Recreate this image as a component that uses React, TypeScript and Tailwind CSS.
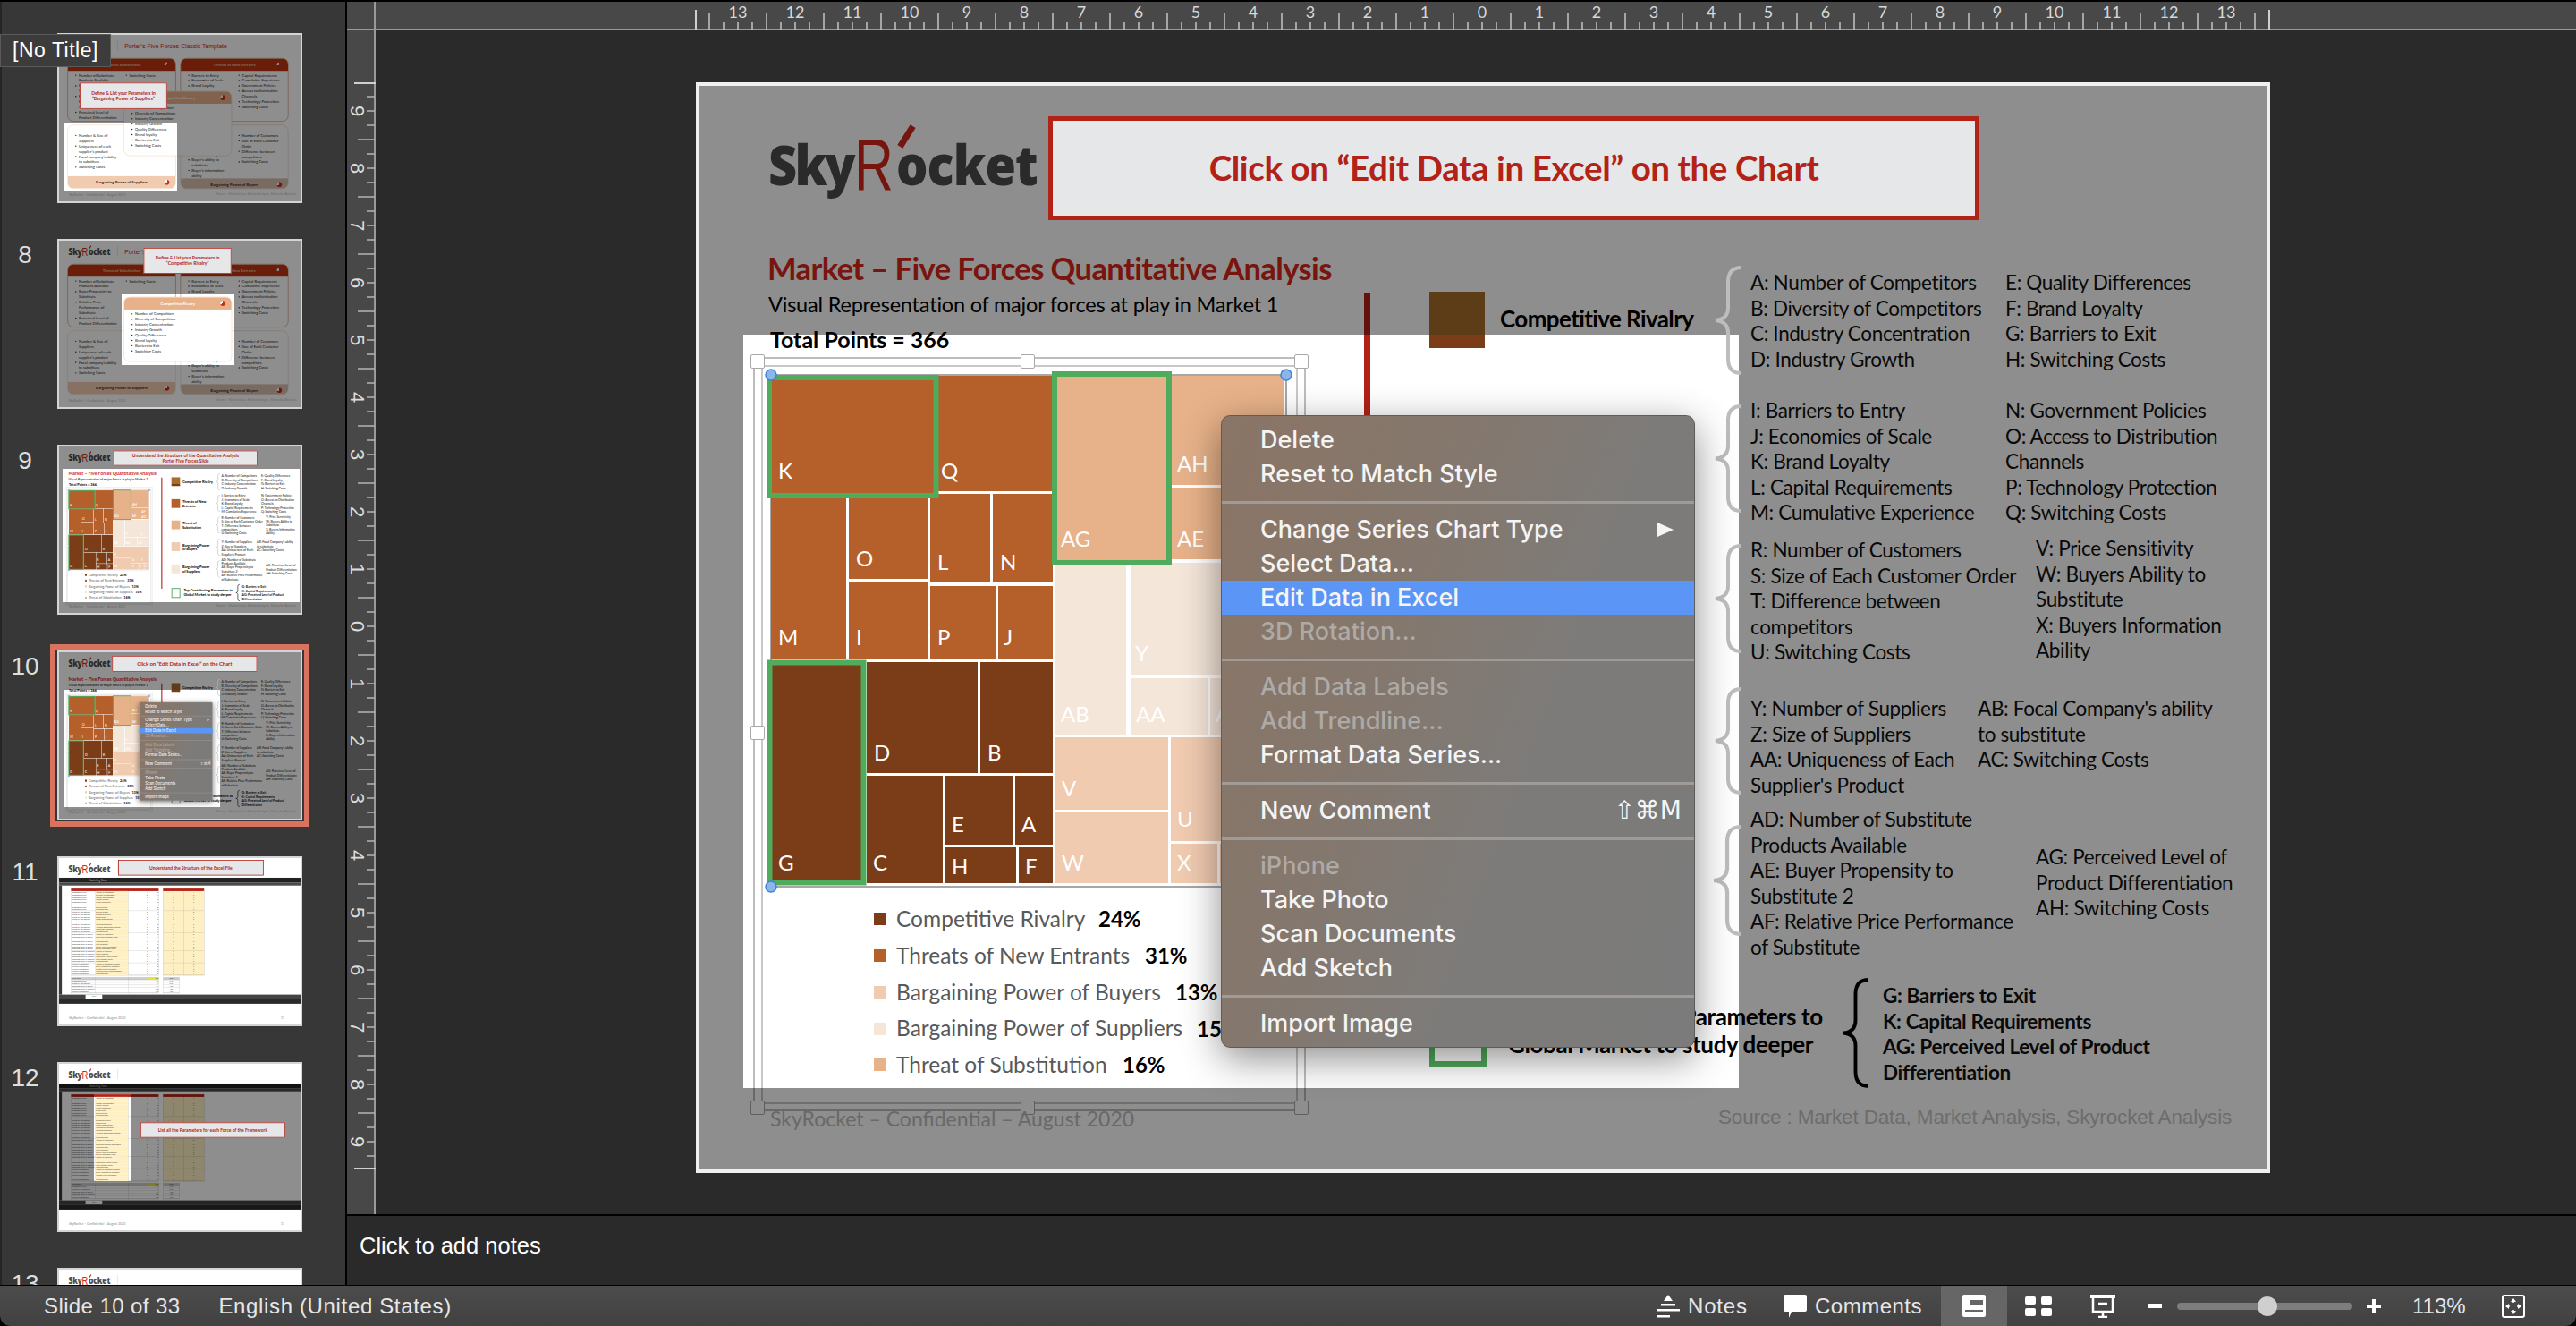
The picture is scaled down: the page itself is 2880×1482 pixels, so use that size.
import React from 'react';

const FORCES = ['Competitive Rivalry', 'Threats of New Entrants', 'Bargaining Power of Buyers', 'Bargaining Power of Suppliers', 'Threat of Substitution'];

const PARAMS: [number, string][] = [
  [0, 'Number of Competitors'], [0, 'Diversity of Competitors'], [0, 'Industry Concentration'], [0, 'Industry Growth'],
  [0, 'Quality Differences'], [0, 'Brand Loyalty'], [0, 'Barriers to Exit'], [0, 'Switching Costs'],
  [1, 'Barriers to Entry'], [1, 'Economies of Scale'], [1, 'Brand Loyalty'], [1, 'Capital Requirements'],
  [1, 'Cumulative Experience'], [1, 'Government Policies'], [1, 'Access to Distribution Channels'], [1, 'Technology Protection'], [1, 'Switching Costs'],
  [2, 'Number of Customers'], [2, 'Size of Each Customer Order'], [2, 'Difference between competitors'], [2, 'Switching Costs'],
  [2, 'Price Sensitivity'], [2, 'Buyers Ability to Substitute'], [2, 'Buyers Information Ability'],
  [3, 'Number of Suppliers'], [3, 'Size of Suppliers'], [3, 'Uniqueness of Each Product'], [3, 'Focal Company ability'], [3, 'Switching Costs'],
  [4, 'Number of Substitute Products'], [4, 'Buyer Propensity to Substitute'], [4, 'Relative Price Performance'], [4, 'Perceived Level of Differentiation'], [4, 'Switching Costs'],
];

const ORANGE = '#b55f2a';
const BROWN = '#7b3d18';
const PEACH = '#e7b28a';
const PALE = '#f5e6da';
const SAND = '#f0cbb0';

// x, y, right, bottom in page pixels, label offset from the left
const CELLS: [string, number, number, number, number, string, number, number][] = [
  ['K', 862, 420, 1048, 551, ORANGE, 8, 16],
  ['Q', 1049, 420, 1177, 549, ORANGE, 3, 14],
  ['M', 862, 551, 946, 736, ORANGE, 8, 15],
  ['O', 949, 551, 1037, 647, ORANGE, 8, 14],
  ['I', 949, 650, 1037, 736, ORANGE, 8, 15],
  ['L', 1040, 552, 1107, 651, ORANGE, 8, 14],
  ['N', 1110, 552, 1177, 651, ORANGE, 8, 14],
  ['P', 1040, 655, 1113, 736, ORANGE, 8, 15],
  ['J', 1116, 655, 1177, 736, ORANGE, 6, 15],
  ['G', 862, 739, 966, 987, BROWN, 8, 14],
  ['D', 969, 740, 1093, 864, BROWN, 8, 14],
  ['B', 1096, 740, 1177, 864, BROWN, 8, 14],
  ['C', 969, 867, 1054, 987, BROWN, 7, 14],
  ['E', 1057, 867, 1132, 944, BROWN, 7, 14],
  ['A', 1135, 867, 1177, 944, BROWN, 7, 14],
  ['H', 1057, 947, 1136, 987, BROWN, 7, 10],
  ['F', 1139, 947, 1177, 987, BROWN, 7, 10],
  ['AG', 1177, 420, 1306, 629, PEACH, 9, 18],
  ['AH', 1310, 420, 1436, 542, PEACH, 6, 15],
  ['AE', 1310, 545, 1372, 625, PEACH, 6, 14],
  ['AF', 1375, 545, 1436, 590, PEACH, 6, 10],
  ['AD', 1375, 593, 1436, 625, PEACH, 6, 8],
  ['AB', 1180, 632, 1259, 821, PALE, 6, 14],
  ['Y', 1264, 629, 1370, 754, PALE, 5, 15],
  ['Z', 1373, 629, 1436, 754, PALE, 6, 15],
  ['AA', 1264, 758, 1350, 821, PALE, 6, 14],
  ['AC', 1353, 758, 1436, 821, PALE, 6, 14],
  ['V', 1180, 824, 1306, 905, SAND, 7, 15],
  ['W', 1180, 908, 1306, 987, SAND, 7, 14],
  ['U', 1309, 824, 1370, 940, SAND, 7, 16],
  ['T', 1373, 824, 1436, 940, SAND, 7, 16],
  ['X', 1309, 943, 1361, 987, SAND, 7, 14],
  ['R', 1364, 943, 1400, 987, SAND, 5, 14],
  ['S', 1403, 943, 1436, 987, SAND, 5, 14],
];

function Treemap() {
  return (
    <svg className="absolute left-[72px] top-[317px] w-[600px] h-[684px]" viewBox="850 409 600 684">
      <rect x="862" y="419" width="576" height="572" fill="white" stroke="#8a8a8a" strokeWidth="1.5" />
      {CELLS.map(([name, x, y, r, b, fill, lx, ly]) => (
        <g key={name}>
          <rect x={x} y={y} width={r - x} height={b - y} fill={fill} />
          <text x={x + lx} y={b - ly} fill="white" fontSize="24">{name}</text>
        </g>
      ))}
      <rect x="860" y="422" width="186.500" height="132" fill="none" stroke="#51ab5c" strokeWidth="6" />
      <rect x="1179" y="418" width="128" height="211" fill="none" stroke="#51ab5c" strokeWidth="6" />
      <rect x="860.500" y="740.500" width="105" height="246" fill="none" stroke="#51ab5c" strokeWidth="6" />
      <circle cx="862" cy="419" r="6" fill="#8ab6ec" stroke="#3c82d8" strokeWidth="1.500" />
      <circle cx="862" cy="991" r="6" fill="#8ab6ec" stroke="#3c82d8" strokeWidth="1.500" />
      <circle cx="1438" cy="419" r="6" fill="#8ab6ec" stroke="#3c82d8" strokeWidth="1.500" />
    </svg>
  );
}

function Logo() {
  return (
    <div className="absolute left-[81px] top-[46px] h-[90px] w-[300px]">
      <span className="absolute left-0 top-[3px] text-[62px] leading-[84px] font-black tracking-[-3px] scale-x-[0.9] origin-left text-[#4c4c4c] [font-family:'Open_Sans',sans-serif]">Sky</span>
      <span className="absolute left-[96px] top-[-4px] text-[82px] leading-[100px] text-[#d4241a] [font-family:'Liberation_Sans',sans-serif] scale-x-[0.74] origin-left">R</span>
      <span className="absolute left-[151px] top-[1px] w-[7px] h-[27px] bg-[#d4241a] rotate-[32deg]" />
      <span className="absolute left-[143px] top-[3px] text-[62px] leading-[84px] font-black tracking-[-1.100px] scale-x-[0.9] origin-left text-[#4c4c4c] [font-family:'Open_Sans',sans-serif]">ocket</span>
    </div>
  );
}

function Brace({ className, stroke = '#bdbdbd' }: { className: string; stroke?: string }) {
  return (
    <svg className={className} viewBox="0 0 32 122" preserveAspectRatio="none" fill="none">
      <path d="M32 2C21 2 17 8 17 18L17 47C17 55 13 60 3 61C13 62 17 67 17 75L17 104C17 114 21 120 32 120" stroke={stroke} strokeWidth="4" />
    </svg>
  );
}

function TextCol({ className, lines }: { className: string; lines: string[] }) {
  return (
    <div className={`absolute whitespace-nowrap text-[22.5px] leading-[28.500px] tracking-[-0.35px] text-[#111] ${className}`}>
      {lines.map((l) => (
        <div key={l}>{l}</div>
      ))}
    </div>
  );
}

const LEGEND = [
  { name: FORCES[0], pct: '24%', color: 'bg-[#7b3d18]', w: 'w-[226px]' },
  { name: FORCES[1], pct: '31%', color: 'bg-[#b55f2a]', w: 'w-[278px]' },
  { name: FORCES[2], pct: '13%', color: 'bg-[#f0cbb0]', w: 'w-[312px]' },
  { name: FORCES[3], pct: '15%', color: 'bg-[#f5e6da]', w: 'w-[336px]' },
  { name: FORCES[4], pct: '16%', color: 'bg-[#e7b28a]', w: 'w-[253px]' },
];

function Legend() {
  return (
    <div className="absolute left-[199px] top-[915px] flex flex-col">
      {LEGEND.map((row) => (
        <div key={row.name} className="flex h-[40.750px] items-center whitespace-nowrap">
          <div className={`w-[13px] h-[14px] mr-[12px] ${row.color}`} />
          <div className={`text-[24.500px] text-[#595959] ${row.w}`}>{row.name}</div>
          <div className="text-[24px] font-bold text-black">{row.pct}</div>
        </div>
      ))}
    </div>
  );
}

function Callout({ className, children }: { className: string; children: React.ReactNode }) {
  return (
    <div className={`absolute z-20 flex items-center justify-center border-[5px] border-[#b22217] bg-[#e6e7e9] text-center font-bold text-[#b22217] ${className}`}>
      {children}
    </div>
  );
}

function Footer() {
  return (
    <>
      <div className="absolute left-[83px] top-[1143px] text-[23px] leading-[30px] whitespace-nowrap text-[#bcbcbc]">SkyRocket – Confidential – August 2020</div>
      <div className="absolute left-[1143px] top-[1142px] text-[22.500px] leading-[30px] tracking-[-0.15px] whitespace-nowrap text-[#c4c4c4] [font-family:'Liberation_Sans',sans-serif]">Source : Market Data, Market Analysis, Skyrocket Analysis</div>
    </>
  );
}

const SWATCHES = [
  { top: 'top-[234px]', bg: 'bg-[linear-gradient(#a66e2b_48px,#7b3d18_48px)]', label: 'Competitive Rivalry', ltop: 'top-[249px]' },
  { top: 'top-[391px]', bg: 'bg-[#b55f2a]', label: 'Threats of New Entrants', ltop: 'top-[395px]' },
  { top: 'top-[544px]', bg: 'bg-[#e7b28a]', label: 'Threat of Substitution', ltop: 'top-[548px]' },
  { top: 'top-[701px]', bg: 'bg-[#f0cbb0]', label: 'Bargaining Power of Buyers', ltop: 'top-[705px]' },
  { top: 'top-[860px]', bg: 'bg-[#f5e6da]', label: 'Bargaining Power of Suppliers', ltop: 'top-[864px]' },
];

function Forces({ menu, spot, callout, calloutClass, calloutText }: { menu?: boolean; spot: string; callout: string; calloutClass: string; calloutText: string }) {
  return (
    <>
      <Logo />
      <div className="absolute left-[80px] top-[186px] text-[34.500px] leading-[44px] font-bold whitespace-nowrap tracking-[-0.6px] text-[#d8261a]">Market – Five Forces Quantitative Analysis</div>
      <div className="absolute left-[81px] top-[232px] text-[23.500px] leading-[32px] tracking-[-0.2px] whitespace-nowrap text-black">Visual Representation of major forces at play in Market 1</div>
      <div className="absolute left-[83px] top-[270px] text-[25px] leading-[34px] font-bold whitespace-nowrap text-black">Total Points = 366</div>

      <div className="absolute left-[747px] top-[236px] w-[7px] h-[798px] bg-[#b22217]" />
      {SWATCHES.map((s) => (
        <div key={s.label}>
          <div className={`absolute left-[820px] w-[62px] h-[63px] ${s.top} ${s.bg}`} />
          <div className={`absolute left-[899px] text-[26px] leading-[30px] font-bold tracking-[-0.6px] text-black ${s.ltop} ${s.label.length > 19 ? 'w-[205px]' : 'w-[230px] whitespace-nowrap'}`}>{s.label}</div>
        </div>
      ))}
      <div className="absolute left-[820px] top-[1029px] w-[64px] h-[71px] border-[6px] border-[#51ab5c] bg-white" />
      <div className="absolute left-[908px] top-[1029px] text-[26px] leading-[31px] font-bold tracking-[-0.4px] whitespace-nowrap text-black">
        <div>Top Contributing Parameters to</div>
        <div>Global Market to study deeper</div>
      </div>

      <TextCol className="left-[1179px] top-[210px]" lines={['A: Number of Competitors', 'B: Diversity of Competitors', 'C: Industry Concentration', 'D: Industry Growth']} />
      <TextCol className="left-[1464px] top-[210px]" lines={['E: Quality Differences', 'F: Brand Loyalty', 'G: Barriers to Exit', 'H: Switching Costs']} />
      <TextCol className="left-[1179px] top-[353px]" lines={['I: Barriers to Entry', 'J: Economies of Scale', 'K: Brand Loyalty', 'L: Capital Requirements', 'M: Cumulative Experience']} />
      <TextCol className="left-[1464px] top-[353px]" lines={['N: Government Policies', 'O: Access to Distribution', 'Channels', 'P: Technology Protection', 'Q: Switching Costs']} />
      <TextCol className="left-[1179px] top-[509px]" lines={['R: Number of Customers', 'S: Size of Each Customer Order', 'T: Difference between', 'competitors', 'U: Switching Costs']} />
      <TextCol className="left-[1498px] top-[507px]" lines={['V: Price Sensitivity', 'W: Buyers Ability to', 'Substitute', 'X: Buyers Information', 'Ability']} />
      <TextCol className="left-[1179px] top-[686px]" lines={['Y: Number of Suppliers', 'Z: Size of Suppliers', 'AA: Uniqueness of Each', "Supplier's Product"]} />
      <TextCol className="left-[1433px] top-[686px]" lines={["AB: Focal Company's ability", 'to substitute', 'AC: Switching Costs']} />
      <TextCol className="left-[1179px] top-[810px]" lines={['AD: Number of Substitute', 'Products Available', 'AE: Buyer Propensity to', 'Substitute 2', 'AF: Relative Price Performance', 'of Substitute']} />
      <TextCol className="left-[1498px] top-[852px]" lines={['AG: Perceived Level of', 'Product Differentiation', 'AH: Switching Costs']} />
      <TextCol className="left-[1327px] top-[1007px] font-bold" lines={['G: Barriers to Exit', 'K: Capital Requirements', 'AG: Perceived Level of Product', 'Differentiation']} />

      <div className="absolute left-[64px] top-[307px] w-[618px] h-[843px] border-2 border-[#bdbdbd]" />
      <div className="absolute left-[73px] top-[316px] w-[600px] h-[826px] border-2 border-[#c8c8c8]" />
      <Treemap />
      {['left-[61px] top-[304px]', 'left-[363px] top-[304px]', 'left-[669px] top-[304px]', 'left-[61px] top-[719px]', 'left-[61px] top-[1138px]', 'left-[363px] top-[1138px]', 'left-[669px] top-[1138px]', 'left-[669px] top-[719px]'].map((c) => (
        <div key={c} className={`absolute w-[16px] h-[16px] rounded-[2px] border border-[#aaa] bg-white ${c}`} />
      ))}
      <Legend />
      <Footer />

      <div className={`absolute ${spot} shadow-[0_0_0_3000px_rgba(0,0,0,0.443)]`} />

      <Brace className="absolute z-10 left-[1137px] top-[205px] w-[32px] h-[122px]" />
      <Brace className="absolute z-10 left-[1137px] top-[360px] w-[32px] h-[121px]" />
      <Brace className="absolute z-10 left-[1137px] top-[516px] w-[32px] h-[122px]" />
      <Brace className="absolute z-10 left-[1137px] top-[676px] w-[32px] h-[120px]" />
      <Brace className="absolute z-10 left-[1135px] top-[830px] w-[34px] h-[124px]" />
      <Brace className="absolute z-10 left-[1280px] top-[1001px] w-[31px] h-[123px]" stroke="#000" />

      <Callout className={calloutClass}>
        <div className={`whitespace-pre-line ${callout}`}>{calloutText}</div>
      </Callout>
      {menu && <ContextMenu />}
    </>
  );
}

type MenuRow = { label?: string; dim?: boolean; active?: boolean; arrow?: boolean; keys?: string };

const MENU: MenuRow[] = [
  { label: 'Delete' }, { label: 'Reset to Match Style' }, {},
  { label: 'Change Series Chart Type', arrow: true }, { label: 'Select Data...' }, { label: 'Edit Data in Excel', active: true }, { label: '3D Rotation...', dim: true }, {},
  { label: 'Add Data Labels', dim: true }, { label: 'Add Trendline...', dim: true }, { label: 'Format Data Series...' }, {},
  { label: 'New Comment', keys: '⇧⌘M' }, {},
  { label: 'iPhone', dim: true }, { label: 'Take Photo' }, { label: 'Scan Documents' }, { label: 'Add Sketch' }, {},
  { label: 'Import Image' },
];

function ContextMenu() {
  return (
    <div className="absolute z-30 left-[587px] top-[372px] w-[530px] h-[707px] rounded-[10px] border border-[#5c5c5c] bg-[linear-gradient(110deg,#8a7566_0%,#85776c_32%,#7d7b79_62%,#7b7b7b_100%)] py-[8px] shadow-[0_12px_44px_rgba(0,0,0,0.45)] [font-family:Inter,sans-serif]">
      {MENU.map((row, i) =>
        row.label ? (
          <div key={row.label} className={`flex h-[38px] items-center justify-between pl-[43px] pr-[14px] text-[27px] font-medium whitespace-nowrap ${row.active ? 'bg-[#5b96f7] text-[#f5f5f5]' : row.dim ? 'text-[#aeaaa6]' : 'text-[#f4f4f4]'}`}>
            <span>{row.label}</span>
            {row.arrow && (
              <svg className="mr-[9px] w-[18px] h-[18px]" viewBox="0 0 18 18"><path d="M0 1L18 9L0 17Z" fill="#f4f4f4" /></svg>
            )}
            {row.keys && <span className="text-[28px] [font-family:'DejaVu_Sans',sans-serif]">{row.keys}</span>}
          </div>
        ) : (
          <div key={i} className="flex h-[24px] items-center">
            <div className="h-[3px] w-full bg-[#a09b96]" />
          </div>
        ),
      )}
    </div>
  );
}

type PanelProps = { pos: string; title: string; head: string; bottom?: boolean; border: string; cols: string[][]; colClass?: string };

function Panel({ pos, title, head, bottom, border, cols, colClass }: PanelProps) {
  const header = (
    <div className={`flex h-[88px] shrink-0 items-center justify-center relative text-[28px] font-bold ${head}`}>
      {title}
      <div className="absolute right-[44px] w-[36px] h-[36px] rounded-full bg-[conic-gradient(#cc2a1c_0_70%,#f4f4f4_70%)]" />
    </div>
  );
  return (
    <div className={`absolute flex flex-col overflow-hidden rounded-[44px] border-[3px] bg-white ${border} ${pos}`}>
      {!bottom && header}
      <div className={`flex flex-1 gap-[24px] px-[36px] text-[27px] leading-[38px] text-[#222] ${colClass ?? 'pt-[12px]'}`}>
        {cols.map((c, i) => (
          <ul key={i} className="flex-1 list-disc pl-[42px]">
            {c.map((item) => (
              <li key={item}>{item}</li>
            ))}
          </ul>
        ))}
      </div>
      {bottom && header}
    </div>
  );
}

function PorterSlide({ spot, calloutClass, lines, hideLogo }: { spot: string; calloutClass: string; lines: string[]; hideLogo?: boolean }) {
  return (
    <>
      {!hideLogo && <Logo />}
      <div className="absolute left-[430px] top-[52px] w-[3px] h-[70px] bg-[#ccc]" />
      <div className="absolute left-[483px] top-[68px] text-[44px] leading-[56px] whitespace-nowrap text-[#d8261a] [font-family:'Liberation_Sans',sans-serif]">Porter's Five Forces Classic Template</div>
      <Panel pos="left-[73px] top-[180px] w-[779px] h-[455px]" title="Threat of Substitution" head="bg-[#be3612] text-[#e8c0a8]" border="border-[#be6a30]"
        cols={[['Number of Substitute Products Available', 'Buyer Propensity to Substitute', 'Relative Price Performance of Substitute', 'Perceived Level of Product Differentiation'], ['Switching Costs']]} />
      <Panel pos="left-[884px] top-[180px] w-[776px] h-[455px]" title="Threats of New Entrants" head="bg-[#be3612] text-[#e8c0a8]" border="border-[#be6a30]"
        cols={[['Barriers to Entry', 'Economies of Scale', 'Brand Loyalty'], ['Capital Requirements', 'Cumulative Experience', 'Government Policies', 'Access to distribution Channels', 'Technology Protection', 'Switching Costs']]} />
      <Panel pos="left-[73px] top-[658px] w-[779px] h-[460px]" bottom title="Bargaining Power of Suppliers" head="bg-[#f0cbb0] text-[#333]" border="border-[#f0cbb0]" colClass="pt-[54px]"
        cols={[['Number & Size of Suppliers', "Uniqueness of each supplier's product", "Focal company's ability to substitute", 'Switching Costs'], []]} />
      <Panel pos="left-[884px] top-[658px] w-[776px] h-[460px]" bottom title="Bargaining Power of Buyers" head="bg-[#dcc0ae] text-[#333]" border="border-[#dcc0ae]" colClass="pt-[54px] [&>ul:first-child]:pt-[138px]"
        cols={[['Price Sensitivity', "Buyer's ability to substitute", "Buyer's information ability"], ['Number of Customers', 'Size of Each Customer Order', 'Difference between competitors', 'Switching Costs']]} />
      <Panel pos="left-[477px] top-[416px] w-[777px] h-[466px]" title="Competitive Rivalry" head="bg-[#e7b28a] text-white" border="border-[#f0cbb0]"
        cols={[['Number of Competitors', 'Diversity of Competitors', 'Industry Concentration', 'Industry Growth', 'Quality Differences', 'Brand loyalty', 'Barriers to Exit', 'Switching Costs']]} />
      <Footer />
      <div className={`absolute ${spot} shadow-[0_0_0_3000px_rgba(0,0,0,0.443)]`} />
      <Callout className={`text-[32px] leading-[38px] ${calloutClass}`}>
        <div>
          {lines.map((l) => (
            <div key={l}>{l}</div>
          ))}
        </div>
      </Callout>
    </>
  );
}

function SheetCell({ className, children }: { className: string; children?: React.ReactNode }) {
  return <div className={`truncate border-r border-[#777] px-[4px] ${className}`}>{children}</div>;
}

function Sheet() {
  return (
    <div className="absolute left-[13px] top-[154px] w-[1734px] h-[905px] flex flex-col bg-white">
      <div className="flex h-[36px] items-center bg-[#222] pl-[220px] text-[18px] text-[#bbb]">Switching Costs</div>
      <div className="h-[20px] bg-[#4a4a4a]" />
      <div className="flex flex-1 min-h-0">
        <div className="w-[20px] bg-[#3a3a3a]" />
        <div className="flex flex-col pl-[65px] pt-[21px] text-[12.500px] leading-[17.760px] text-[#444]">
          <div className="flex gap-[30px]">
            <div className="w-[631px] border border-[#777]">
              <div className="grid h-[18px] grid-cols-[175px_235px_146px_75px] bg-[#b22217]" />
              {PARAMS.map(([f, p], i) => (
                <div key={i} className={`grid grid-cols-[175px_235px_146px_75px] h-[17.760px] ${PARAMS[i + 1]?.[0] !== f ? 'border-b border-[#777]' : ''}`}>
                  <SheetCell className="">{FORCES[f]}</SheetCell>
                  <SheetCell className="bg-[#fff0c4]">{p}</SheetCell>
                  <SheetCell className="text-right">{(i * 7) % 9 + 1}</SheetCell>
                  <div className="px-[4px] text-right">{(i * 5) % 8 + 2}</div>
                </div>
              ))}
            </div>
            <div className="w-[296px] border border-[#777] bg-[#fff0c4]">
              <div className="h-[18px] bg-[#b22217]" />
              {PARAMS.map(([f], i) => (
                <div key={i} className={`grid grid-cols-2 h-[17.760px] text-center ${PARAMS[i + 1]?.[0] !== f ? 'border-b border-[#777]' : ''}`}>
                  <SheetCell className="">{(i * 3) % 7 + 1}</SheetCell>
                  <div>{(i * 11) % 9 + 1}</div>
                </div>
              ))}
            </div>
          </div>
          <div className="flex gap-[30px] pt-[12px]">
            <div className="w-[631px] border border-[#777]">
              {['Grand Total', ...FORCES].map((f, i) => (
                <div key={f} className={`grid grid-cols-[175px_235px_146px_75px] h-[19px] border-b border-[#777] ${i === 0 ? 'bg-[#ccc]' : ''}`}>
                  <SheetCell className="">{f}</SheetCell>
                  <SheetCell className="" />
                  <SheetCell className="" />
                  <div className={`text-right px-[4px] ${i === 0 ? 'bg-[#e6e040]' : ''}`}>{i === 0 ? 366 : 40 + i * 17}</div>
                </div>
              ))}
            </div>
            <div className="w-[120px] border border-[#777]">
              {['Total', '24%', '31%', '13%', '15%', '16%'].map((f, i) => (
                <div key={f} className={`h-[19px] border-b border-[#777] text-center ${i === 0 ? 'bg-[#ccc]' : ''}`}>{f}</div>
              ))}
            </div>
          </div>
        </div>
      </div>
      <div className="flex h-[30px] items-center bg-[#444] pl-[190px]">
        <div className="w-[120px] h-full bg-white text-center text-[14px] text-[#397]">Data</div>
      </div>
      <div className="h-[36px] bg-[#2a2a2a]" />
    </div>
  );
}

function ExcelSlide({ dimmed }: { dimmed?: boolean }) {
  return (
    <>
      <Logo />
      <div className="absolute left-[430px] top-[52px] w-[3px] h-[70px] bg-[#ccc]" />
      <Sheet />
      {dimmed && (
        <div className="absolute left-[13px] top-[154px] w-[1734px] h-[905px] overflow-hidden">
          <div className="absolute left-[252px] top-[75px] w-[270px] h-[623px] shadow-[0_0_0_3000px_rgba(0,0,0,0.443)]" />
        </div>
      )}
      <div className="absolute left-[83px] top-[1144px] text-[23px] leading-[30px] whitespace-nowrap text-[#888]">SkyRocket – Confidential – August 2020</div>
      <div className="absolute left-[1605px] top-[1147px] text-[23px] leading-[30px] text-[#888]">11</div>
    </>
  );
}

function Slide({ children }: { children: React.ReactNode }) {
  return (
    <div className="relative w-[1760px] h-[1219px] overflow-hidden bg-white [font-family:Lato,sans-serif]">
      {children}
      <div className="pointer-events-none absolute inset-0 z-40 border-x-[3px] border-t-[4px] border-b-[4px] border-[#efefef]" />
    </div>
  );
}

const forcesMain = (
  <Forces
    menu
    spot="left-[53px] top-[282px] w-[1113px] h-[842px]"
    calloutClass="left-[394px] top-[38px] w-[1041px] h-[116px]"
    callout="text-[38.500px] tracking-[-0.4px]"
    calloutText="Click on “Edit Data in Excel” on the Chart"
  />
);

const THUMBS: { n: number; body: React.ReactNode }[] = [
  { n: 7, body: <PorterSlide hideLogo spot="left-[45px] top-[641px] w-[813px] h-[491px]" calloutClass="left-[162px] top-[356px] w-[626px] h-[188px]" lines={['Define & List your Parameters in', '“Bargaining Power of Suppliers”']} /> },
  { n: 8, body: <PorterSlide spot="left-[462px] top-[398px] w-[810px] h-[507px]" calloutClass="left-[620px] top-[64px] w-[630px] h-[185px]" lines={['Define & List your Parameters in', '“Competitive Rivalry”']} /> },
  {
    n: 9,
    body: (
      <Forces
        spot="left-[38px] top-[173px] w-[1702px] h-[957px]"
        calloutClass="left-[404px] top-[42px] w-[1034px] h-[109px]"
        callout="text-[32px] leading-[38px]"
        calloutText={'Understand the Structure of the Quantitative Analysis\nPorter Five Forces Slide'}
      />
    ),
  },
  { n: 10, body: forcesMain },
  {
    n: 11,
    body: (
      <>
        <ExcelSlide />
        <Callout className="left-[437px] top-[26px] w-[1045px] h-[112px] text-[32px]"><div>Understand the Structure of the Excel File</div></Callout>
      </>
    ),
  },
  {
    n: 12,
    body: (
      <>
        <ExcelSlide dimmed />
        <Callout className="left-[597px] top-[433px] w-[1040px] h-[110px] text-[32px]"><div>List all the Parameters for each Force of the Framework</div></Callout>
      </>
    ),
  },
  { n: 13, body: <ExcelSlide /> },
];

function Thumb({ n, body }: { n: number; body: React.ReactNode }) {
  const box = (
    <div className="relative w-[274px] h-[190px] overflow-hidden">
      <div className="absolute left-0 top-0 origin-top-left scale-[0.1557]">
        <Slide>{body}</Slide>
      </div>
      <div className="absolute inset-0 border-2 border-[#d4d4d4]" />
    </div>
  );
  return (
    <div className="flex h-[230px] shrink-0">
      {/* slide 7's number sits under the title tooltip */}
      <div className="w-[52px] pt-[2px] text-center text-[28px] leading-[32px] text-[#dedede]">{n === 7 ? '' : n}</div>
      <div className="pl-[10px]">
        {n === 10 ? <div className="-ml-[8px] -mt-[7px] border-[6px] border-[#d9725e] px-[2px] py-px">{box}</div> : box}
      </div>
    </div>
  );
}

function TopRuler() {
  const ticks: React.ReactNode[] = [];
  for (let k = -54; k <= 54; k++) {
    const x = 1657 + k * 16;
    ticks.push(<line key={k} x1={x} x2={x} y1={Math.abs(k) % 4 === 2 ? 15 : 25} y2="33" stroke="#c4c4c4" strokeWidth="1.500" />);
  }
  const labels: React.ReactNode[] = [];
  for (let k = -13; k <= 13; k++) {
    labels.push(<text key={k} x={1657 + k * 64} y="20" fill="#d8d8d8" fontSize="18" textAnchor="middle" fontFamily="Lato, sans-serif">{Math.abs(k)}</text>);
  }
  return (
    <svg className="block w-[2492px] h-[32px] shrink-0 overflow-visible bg-[#484848]" viewBox="388 2 2492 32">
      <line x1="388" x2="2880" y1="33" y2="33" stroke="#9a9a9a" strokeWidth="2" />
      <line x1="419" x2="419" y1="2" y2="34" stroke="#9a9a9a" strokeWidth="2" />
      {ticks}
      {labels}
      <line x1="778" x2="778" y1="11" y2="40" stroke="#d0d0d0" strokeWidth="2" />
      <line x1="2537" x2="2537" y1="11" y2="40" stroke="#d0d0d0" strokeWidth="2" />
    </svg>
  );
}

function SideRuler() {
  const ticks: React.ReactNode[] = [];
  for (let k = -37; k <= 37; k++) {
    const y = 700 + k * 16;
    ticks.push(<line key={k} x1={Math.abs(k) % 4 === 2 ? 400 : 410} x2="419" y1={y} y2={y} stroke="#b4b4b4" strokeWidth="1.500" />);
  }
  const labels: React.ReactNode[] = [];
  for (let k = -9; k <= 9; k++) {
    const y = 700 + k * 64;
    labels.push(
      <text key={k} x="399" y={y} fill="#dcdcdc" fontSize="22" textAnchor="middle" dominantBaseline="central" fontFamily="Liberation Sans, sans-serif" transform={`rotate(90 399 ${y})`}>
        {Math.abs(k)}
      </text>,
    );
  }
  return (
    <svg className="block w-[32px] h-[1323px] shrink-0 overflow-visible bg-[#484848]" viewBox="388 34 32 1323">
      <line x1="419" x2="419" y1="34" y2="1357" stroke="#9a9a9a" strokeWidth="2" />
      {ticks}
      {labels}
      <line x1="396" x2="426" y1="93" y2="93" stroke="#d0d0d0" strokeWidth="2" />
      <line x1="396" x2="426" y1="1306" y2="1306" stroke="#d0d0d0" strokeWidth="2" />
    </svg>
  );
}

function StatusBar() {
  return (
    <div className="flex h-[46px] shrink-0 items-center rounded-b-[12px] border-t border-black bg-[linear-gradient(#4c4c4c,#414141)] text-[24px] text-[#e6e6e6]">
      <div className="pl-[49px] tracking-[0.4px]">Slide 10 of 33</div>
      <div className="pl-[43px] tracking-[0.65px]">English (United States)</div>
      <div className="flex-1" />
      <svg className="w-[26px] h-[26px]" viewBox="0 0 26 26" fill="white">
        <path d="M13 0L18 7H8Z" />
        <rect x="5" y="10" width="16" height="2.500" />
        <rect x="0" y="16" width="26" height="2.500" />
        <rect x="0" y="23" width="15" height="2.500" />
      </svg>
      <div className="ml-[9px] w-[66px] tracking-[0.8px]">Notes</div>
      <svg className="ml-[41px] w-[26px] h-[26px]" viewBox="0 0 26 26" fill="white">
        <path d="M2 0H24A2 2 0 0 1 26 2V17A2 2 0 0 1 24 19H9L6 26V19H2A2 2 0 0 1 0 17V2A2 2 0 0 1 2 0Z" />
      </svg>
      <div className="ml-[9px] w-[120px] tracking-[0.5px]">Comments</div>
      <div className="ml-[21px] flex h-full w-[74px] items-center justify-center bg-[#666]">
        <svg className="w-[26px] h-[25px]" viewBox="0 0 26 25" fill="white">
          <path fillRule="evenodd" d="M2 0H24A2 2 0 0 1 26 2V23A2 2 0 0 1 24 25H2A2 2 0 0 1 0 23V2A2 2 0 0 1 2 0ZM9 6V12H23V6ZM3 17V19H23V17Z" />
        </svg>
      </div>
      <svg className="ml-[20px] w-[30px] h-[22px]" viewBox="0 0 30 22" fill="white">
        <rect width="12" height="9" rx="2" />
        <rect x="18" width="12" height="9" rx="2" />
        <rect y="13" width="12" height="9" rx="2" />
        <rect x="18" y="13" width="12" height="9" rx="2" />
      </svg>
      <svg className="ml-[43px] w-[28px] h-[26px]" viewBox="0 0 28 26" fill="none" stroke="white" strokeWidth="2.500">
        <path d="M0 2H28" strokeWidth="4" />
        <path d="M3 3V19H25V3" />
        <path d="M9 10H19" />
        <path d="M14 19V25M9 25H19" />
      </svg>
      <div className="ml-[36px] w-[16px] h-[5px] bg-white" />
      <div className="relative ml-[17px] flex h-[8px] w-[196px] items-center rounded-full bg-[#7d7d7d]">
        <div className="absolute left-[90px] w-[22px] h-[22px] rounded-full bg-[#cfcfcf]" />
      </div>
      <svg className="ml-[16px] w-[16px] h-[16px]" viewBox="0 0 16 16" fill="white"><path d="M6 0H10V6H16V10H10V16H6V10H0V6H6Z" /></svg>
      <div className="ml-[35px] w-[59px]">113%</div>
      <svg className="ml-[41px] w-[26px] h-[26px]" viewBox="0 0 26 26" fill="none" stroke="white" strokeWidth="2">
        <rect x="1" y="1" width="24" height="24" rx="2" />
        <path d="M13 5V9M13 17V21M5 13H9M17 13H21" strokeWidth="1.500" />
        <path d="M13 4L10 8H16ZM13 22L10 18H16ZM4 13L8 10V16ZM22 13L18 10V16Z" fill="white" stroke="none" />
      </svg>
      <div className="w-[57px]" />
    </div>
  );
}

export default function App() {
  return (
    <div className="relative flex h-[1482px] w-[2880px] flex-col overflow-hidden bg-black [font-family:'Liberation_Sans',sans-serif]">
      <div className="h-[2px] shrink-0 bg-black" />
      <div className="flex min-h-0 flex-1">
        {/* slide list */}
        <div className="flex w-[386px] shrink-0 flex-col overflow-hidden border-l-2 border-[#252525] bg-[#373737] pt-[35px]">
          {THUMBS.map((t) => (
            <Thumb key={t.n} n={t.n} body={t.body} />
          ))}
        </div>
        <div className="w-[2px] shrink-0 bg-black" />
        <div className="flex min-w-0 flex-1 flex-col">
          <TopRuler />
          <div className="flex min-h-0 flex-1">
            <SideRuler />
            <div className="flex-1 overflow-hidden bg-[#2a2a2a] pl-[358px] pt-[58px]">
              <Slide>{forcesMain}</Slide>
            </div>
          </div>
          <div className="flex h-[79px] shrink-0 items-center border-t-2 border-black bg-[#2a2a2a] pb-[10px] pl-[14px] text-[25.500px] text-white">Click to add notes</div>
        </div>
      </div>
      <StatusBar />
      <div className="absolute left-0 top-[38px] flex h-[37px] w-[124px] items-center justify-center border border-[#5a5a5a] bg-[#3c3c3c] text-[23px] tracking-[0.5px] text-white">[No Title]</div>
    </div>
  );
}
